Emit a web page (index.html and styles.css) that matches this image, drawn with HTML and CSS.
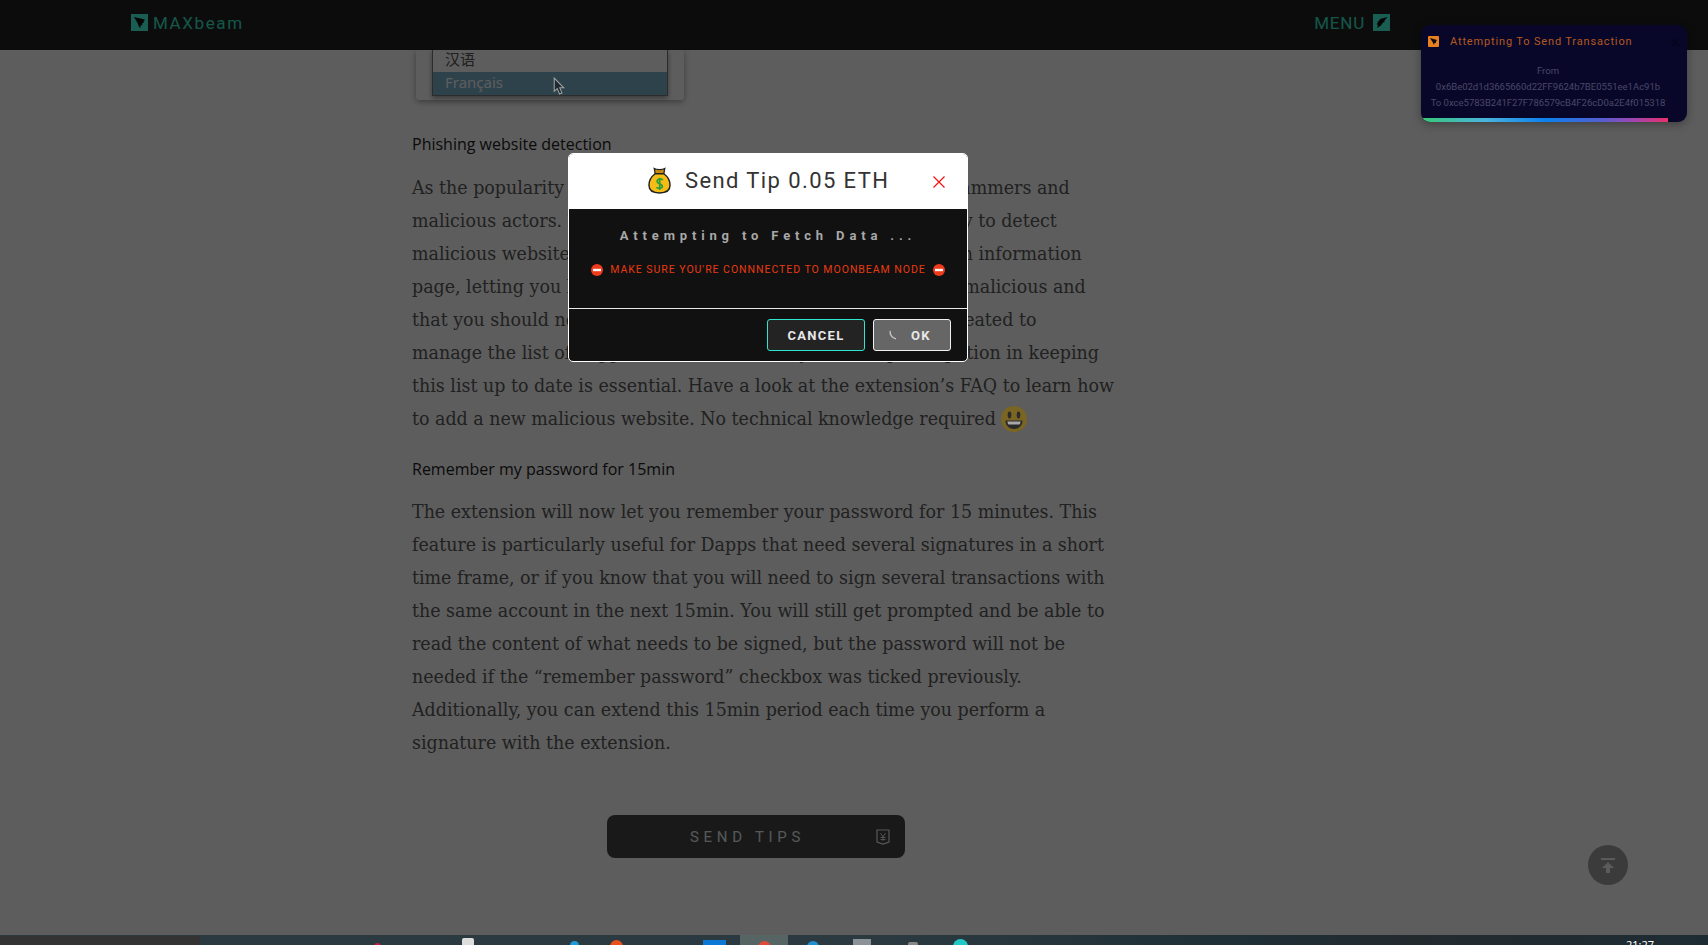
FILE: index.html
```html
<!DOCTYPE html>
<html lang="en">
<head>
<meta charset="utf-8">
<title>MAXbeam</title>
<link rel="stylesheet" href="styles.css">
</head>
<body>
<div class="viewport">
  <header class="topbar">
    <a class="brand">
      <svg class="square-icon" viewBox="0 0 17 17"><rect width="17" height="17" fill="#47ffe0"/><path d="M3 3 L14 5.5 L12.5 7.5 L13 8.5 L11 9.5 L11.5 11 L9.5 11.5 L9.5 14 L8 13 L6.5 9 Z" fill="#0d0d0d"/></svg>
      <span class="brand-name">MAXbeam</span>
    </a>
    <a class="menu">
      <span class="menu-label">MENU</span>
      <svg class="square-icon" viewBox="0 0 17 17"><rect width="17" height="17" fill="#47ffe0"/><path d="M14.5 3 L7 5 L6 7 L4.5 7.5 L5 9 L3.5 10 L5 11 L4 14 L8 11.5 L9.5 9 L11.5 8 L11.5 6.5 Z" fill="#0d0d0d"/></svg>
    </a>
  </header>

  <main class="article">
    <div class="figure">
      <div class="dropdown">
        <div class="option">汉语</div>
        <div class="option selected">Français
          <svg class="cursor" viewBox="0 0 11 17"><path d="M1 1 L1 13.5 L3.8 11 L6 16 L8.3 15 L6.2 10.2 L10 10.2 Z" fill="#1f2a30" stroke="#a0a0a0" stroke-width="1"/></svg>
        </div>
      </div>
    </div>

    <h4 class="subhead first">Phishing website detection</h4>
    <p class="copy copy-first">
      <span class="line">As the popularity of Polkadot grows, so does the interest of scammers and</span>
      <span class="line">malicious actors. To help you, the extension now has the ability to detect</span>
      <span class="line">malicious websites. It then blocks them and redirects you to an information</span>
      <span class="line">page, letting you know that the website you're about to see is malicious and</span>
      <span class="line">that you should not interact with it. A public repository was created to</span>
      <span class="line">manage the list of suggested websites, and your own participation in keeping</span>
      <span class="line">this list up to date is essential. Have a look at the extension’s FAQ to learn how</span>
      <span class="line">to add a new malicious website. No technical knowledge required
        <svg class="smile" viewBox="0 0 26 26"><circle cx="13" cy="13" r="13" fill="#7a6522"/><ellipse cx="8.5" cy="9" rx="1.8" ry="3.4" fill="#2a2a2a"/><ellipse cx="17.5" cy="9" rx="1.8" ry="3.4" fill="#2a2a2a"/><path d="M4.5 14.5 H21.5 C21.5 20 17.5 23 13 23 C8.5 23 4.5 20 4.5 14.5 Z" fill="#2a2a2a"/><path d="M6.5 15.5 H19.5 C19.5 17 19 18 18.5 18.5 H7.5 C7 18 6.5 17 6.5 15.5 Z" fill="#a8a8a8"/></svg>
      </span>
    </p>

    <h4 class="subhead second">Remember my password for 15min</h4>
    <p class="copy">
      <span class="line">The extension will now let you remember your password for 15 minutes. This</span>
      <span class="line">feature is particularly useful for Dapps that need several signatures in a short</span>
      <span class="line">time frame, or if you know that you will need to sign several transactions with</span>
      <span class="line">the same account in the next 15min. You will still get prompted and be able to</span>
      <span class="line">read the content of what needs to be signed, but the password will not be</span>
      <span class="line">needed if the “remember password” checkbox was ticked previously.</span>
      <span class="line">Additionally, you can extend this 15min period each time you perform a</span>
      <span class="line">signature with the extension.</span>
    </p>

    <div class="send-row">
      <button class="send-btn">
        <span class="send-label">SEND TIPS</span>
        <svg class="send-icon" viewBox="0 0 16 16"><path d="M2 1 H14 V13 L8 15 L2 13 Z" fill="none" stroke="#eee" stroke-width="1.2"/><path d="M5.5 4 L8 8 L10.5 4 M8 8 V12 M5.5 8.5 H10.5 M5.5 10.5 H10.5" fill="none" stroke="#eee" stroke-width=".9"/></svg>
      </button>
    </div>
  </main>

  <button class="to-top"><svg viewBox="0 0 18 18"><path d="M2 2 H16 V4 H2 Z M9 6 L15 12 H11 V17 H7 V12 H3 Z"/></svg></button>

  <aside class="toast">
    <div class="toast-head">
      <svg class="toast-icon" viewBox="0 0 11 11"><rect width="11" height="11" rx="1" fill="#e8801f"/><path d="M2 2 L9 4 L8 5.5 L8 7 L6.5 7 L6 9 L4.5 6 Z" fill="#0d0d0d"/></svg>
      <span class="toast-title">Attempting To Send Transaction</span>
      <span class="toast-close">×</span>
    </div>
    <div class="toast-body">
      <div>From</div>
      <div>0x6Be02d1d3665660d22FF9624b7BE0551ee1Ac91b</div>
      <div>To 0xce5783B241F27F786579cB4F26cD0a2E4f015318</div>
    </div>
    <div class="toast-progress"></div>
  </aside>

  <div class="overlay"></div>

  <section class="modal">
    <div class="modal-head">
      <svg class="bag" viewBox="0 0 24 28"><path d="M6.5 1.5 C9 3 15 3 17.5 1.5 L16.5 7 L7.5 7 Z" fill="#c98a14" stroke="#222" stroke-width="1.3"/><path d="M7.5 7 C2 11 1 16 1 19 C1 25 6 27 12 27 C18 27 23 25 23 19 C23 16 22 11 16.5 7 Z" fill="#f6bd16" stroke="#222" stroke-width="1.5"/><path d="M15.5 13.5 C14.5 12 9.5 12 9.5 15 C9.5 18 15 17 15 20 C15 22.5 10 22.5 8.8 21 M12.2 11 V24" fill="none" stroke="#2e9e3b" stroke-width="1.8"/></svg>
      <h2 class="modal-title">Send Tip 0.05 ETH</h2>
      <svg class="modal-x" viewBox="0 0 12 12"><path d="M0.5 0.5 L11.5 11.5 M11.5 0.5 L0.5 11.5" stroke="#f01010" stroke-width="1.2"/></svg>
    </div>
    <div class="modal-body">
      <div class="fetching">Attempting to Fetch Data ...</div>
      <div class="warning">
        <svg class="noentry" viewBox="0 0 12 12"><circle cx="6" cy="6" r="6" fill="#ee3b1c"/><rect x="2" y="4.8" width="8" height="2.4" fill="#f4f4f4"/></svg>
        <span>MAKE SURE YOU'RE CONNNECTED TO MOONBEAM NODE</span>
        <svg class="noentry" viewBox="0 0 12 12"><circle cx="6" cy="6" r="6" fill="#ee3b1c"/><rect x="2" y="4.8" width="8" height="2.4" fill="#f4f4f4"/></svg>
      </div>
    </div>
    <div class="modal-foot">
      <button class="btn btn-cancel">CANCEL</button>
      <button class="btn btn-ok">
        <svg class="spinner" viewBox="0 0 8 10"><path d="M1.2 0.8 C0.6 4.5 2.8 8 7 8.8" fill="none" stroke="#c8c8c8" stroke-width="1.3"/></svg>
        <span>OK</span>
      </button>
    </div>
  </section>
</div>

<footer class="taskbar">
  <div class="task-left"></div>
  <div class="task-main">
    <span class="tray-dot dot-red"></span>
    <span class="tray-dot dot-white"></span>
    <span class="tray-dot dot-blue"></span>
    <span class="tray-dot dot-orange"></span>
    <span class="tray-rect rect-blue"></span>
    <span class="task-active"><span class="tray-dot dot-active"></span></span>
    <span class="tray-dot dot-blue2"></span>
    <span class="tray-rect rect-grey"></span>
    <span class="tray-dot dot-grey"></span>
    <span class="tray-dot dot-cyan"></span>
    <span class="clock">21:27</span>
  </div>
</footer>
</body>
</html>
```
FILE: styles.css
```css
* { box-sizing: border-box; }
html, body { margin: 0; height: 100%; }
body {
  display: flex;
  flex-direction: column;
  height: 945px;
  overflow: hidden;
  background: #2a3a40;
  font-family: "Roboto", "Liberation Sans", sans-serif;
}
.viewport {
  position: relative;
  flex: 1;
  min-height: 0;
  overflow: hidden;
  background: #fff;
}

/* top bar */
.topbar {
  height: 50px;
  padding: 0 318px 5px 131px;
  display: flex;
  align-items: center;
  justify-content: space-between;
  background: #232323;
  position: relative;
  z-index: 1;
}
.brand, .menu { display: flex; align-items: center; }
.square-icon { width: 17px; height: 17px; display: block; }
.brand-name {
  margin-left: 5px;
  color: #3be8cc;
  font-size: 17px;
  letter-spacing: 1.6px;
}
.menu-label {
  margin-right: 8px;
  color: #3be8cc;
  font-size: 17px;
  letter-spacing: .8px;
}

/* article */
.article {
  width: 700px;
  margin-left: 412px;
  color: #5a5a5a;
}
.figure {
  width: 268px;
  height: 50px;
  margin-left: 4px;
  padding: 0 16px 4px;
  border-radius: 3px;
  background: #fff;
  box-shadow: 0 2px 6px rgba(0,0,0,.35);
  display: flex;
}
.dropdown {
  flex: 1;
  border: 1px solid #7a7a7a;
  border-top: 0;
  display: flex;
  flex-direction: column;
  justify-content: flex-end;
  box-shadow: 0 2px 5px rgba(0,0,0,.4);
}
.option {
  height: 23px;
  padding-left: 12px;
  font-family: "Noto Sans", "Noto Sans CJK SC", sans-serif;
  font-size: 15px;
  line-height: 21px;
  color: #555;
  position: relative;
}
.option:first-child { height: 22px; line-height: 18px; }
.selected { background: #7eb5d0; color: #fff; }
.cursor { position: absolute; left: 120px; top: 5px; width: 12px; height: 18px; z-index: 5; }
.subhead {
  margin: 0;
  font-family: "Open Sans", "Noto Sans", sans-serif;
  font-weight: 500;
  font-size: 16px;
  line-height: 20px;
  color: #222;
}
.subhead.first { margin-top: 34px; }
.subhead.second { margin-top: 24px; }
.copy {
  margin: 16px 0 0;
  font-family: "DejaVu Serif Condensed", "Liberation Serif", serif;
  font-size: 19.4px;
  line-height: 33px;
}
.copy-first { margin-top: 17px; }
.line { display: block; white-space: nowrap; }
.smile {
  position: relative;
  z-index: 5;
  width: 26px;
  height: 26px;
  vertical-align: -7px;
}
.send-row { margin-top: 56px; padding-left: 195px; }
.send-btn {
  width: 298px;
  height: 43px;
  border: 0;
  border-radius: 8px;
  background: #454545;
  display: flex;
  align-items: center;
  padding: 0 14px 0 83px;
  justify-content: space-between;
}
.send-label {
  color: #e6f0f5;
  font-family: "Roboto", sans-serif;
  font-size: 15px;
  letter-spacing: 4.7px;
}
.send-icon { width: 16px; height: 16px; }

/* back to top */
.to-top {
  position: absolute;
  left: 1588px;
  top: 845px;
  width: 40px;
  height: 40px;
  padding: 11px;
  border: 0;
  border-radius: 50%;
  background: #a2a2a2;
  display: flex;
}
.to-top svg { width: 18px; height: 18px; }
.to-top path { fill: #f8f8f8; }

/* toast */
.toast {
  position: absolute;
  left: 1421px;
  top: 25px;
  width: 266px;
  height: 97px;
  border-radius: 9px;
  background: #08072a;
  box-shadow: 0 2px 10px rgba(0,0,0,.35);
  overflow: hidden;
  z-index: 4;
}
.toast-head {
  display: flex;
  align-items: center;
  height: 11px;
  margin: 11px 0 0 7px;
}
.toast-icon { width: 11px; height: 11px; }
.toast-title {
  margin-left: 11px;
  color: #b4591f;
  font-size: 11px;
  letter-spacing: .85px;
  white-space: nowrap;
}
.toast-close { margin-left: auto; margin-right: 7px; color: #04041a; font-size: 17px; }
.toast-body {
  margin-top: 16px;
  padding-right: 12px;
  text-align: center;
  color: #4a4866;
  font-size: 9.5px;
  line-height: 16px;
}
.toast-progress {
  position: absolute;
  left: 2px;
  bottom: 0;
  width: 245px;
  height: 4px;
  background: linear-gradient(90deg, #38c878, #4ab4dc 25%, #0d7fee 50%, #5060d0 72%, #9a46b4 85%, #e8306a);
}

/* dimming layer */
.overlay {
  position: absolute;
  inset: 0;
  background: rgba(0,0,0,.635);
  z-index: 3;
}

/* modal */
.modal {
  position: absolute;
  left: 568px;
  top: 153px;
  width: 400px;
  height: 209px;
  border: 1px solid #fff;
  border-radius: 5px;
  background: #111;
  overflow: hidden;
  z-index: 4;
}
.modal-head {
  position: relative;
  height: 55px;
  padding: 0 0 2px 79px;
  background: #fff;
  display: flex;
  align-items: center;
}
.bag { width: 23px; height: 27px; display: block; }
.modal-title {
  margin: 0 0 0 14px;
  font-weight: 400;
  font-size: 22px;
  letter-spacing: 1.4px;
  color: #333;
  white-space: nowrap;
}
.modal-x { position: absolute; left: 364px; top: 22px; width: 12px; height: 12px; }
.modal-body {
  height: 99px;
  display: flex;
  flex-direction: column;
  align-items: center;
}
.fetching {
  margin-top: 19px;
  font-size: 13px;
  line-height: 16px;
  font-weight: 700;
  letter-spacing: 4.85px;
  color: #a8a8a8;
  white-space: nowrap;
}
.warning {
  margin-top: 19px;
  display: flex;
  align-items: center;
  gap: 7px;
  color: #e83a10;
  font-size: 10.5px;
  letter-spacing: .97px;
  white-space: nowrap;
}
.noentry { width: 12px; height: 12px; display: block; }
.modal-foot {
  height: 53px;
  border-top: 1px solid #e8e8e8;
  display: flex;
  justify-content: flex-end;
  gap: 8px;
  padding: 10px 16px 0 0;
}
.btn {
  height: 32px;
  border-radius: 3px;
  font-family: "Roboto", sans-serif;
  font-size: 13px;
  font-weight: 700;
  letter-spacing: 1.3px;
  color: #e8e8e8;
  cursor: pointer;
}
.btn-cancel { width: 98px; background: #232323; border: 1px solid #2ee6d0; }
.btn-ok {
  width: 78px;
  background: #666;
  border: 1px solid #f0f0f0;
  display: flex;
  align-items: center;
  padding: 0 0 0 15px;
}
.spinner { width: 8px; height: 10px; margin-right: 14px; }

/* OS taskbar */
.taskbar {
  height: 10px;
  flex: none;
  display: flex;
  overflow: hidden;
}
.task-left { width: 200px; margin-top: 1px; background: #333; }
.task-main {
  position: relative;
  flex: 1;
  background: linear-gradient(90deg, #2a3a40, #2a3a40 45%, #1f2f36 70%, #222a2e 80%, #1d2c33);
}
.tray-dot, .tray-rect { position: absolute; }
.tray-dot { border-radius: 50%; }
.dot-red { left: 174px; top: 8px; width: 7px; height: 7px; background: #c02040; }
.dot-white { left: 262px; top: 3px; width: 12px; height: 12px; border-radius: 2px; background: #ddd; }
.dot-blue { left: 370px; top: 6px; width: 9px; height: 9px; background: #1e9ad6; }
.dot-orange { left: 410px; top: 5px; width: 13px; height: 13px; background: #e8501e; }
.rect-blue { left: 503px; top: 5px; width: 23px; height: 10px; background: #0a78d4; }
.task-active { position: absolute; left: 540px; top: 0; width: 48px; height: 10px; background: #566464; }
.dot-active { left: 18px; top: 6px; width: 13px; height: 13px; background: #e04a3a; }
.dot-blue2 { left: 607px; top: 6px; width: 12px; height: 12px; background: #1e90d0; }
.rect-grey { left: 653px; top: 4px; width: 18px; height: 10px; background: #8b9298; }
.dot-grey { left: 708px; top: 7px; width: 10px; height: 10px; border-radius: 2px; background: #888; }
.dot-cyan { left: 753px; top: 4px; width: 15px; height: 15px; background: #22c8c8; }
.clock {
  position: absolute;
  left: 1426px;
  top: 3px;
  color: #fff;
  font-size: 11px;
  line-height: 13px;
  font-family: "Noto Sans", sans-serif;
}
```
